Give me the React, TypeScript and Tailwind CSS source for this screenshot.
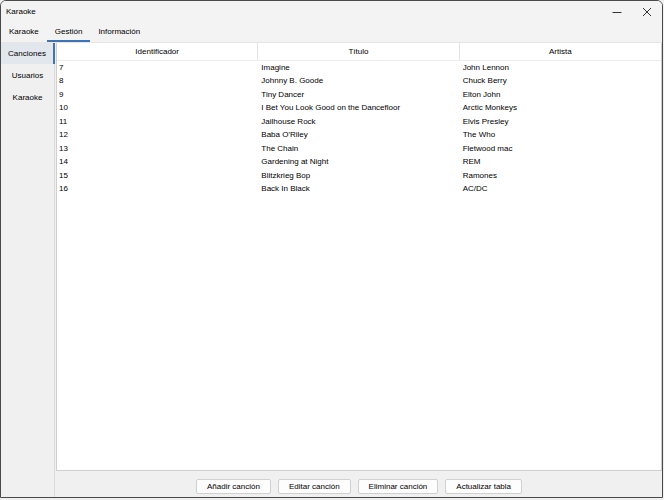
import React from "react"

type Song = { id: number; title: string; artist: string }

const songs: Song[] = [
  { id: 7, title: "Imagine", artist: "John Lennon" },
  { id: 8, title: "Johnny B. Goode", artist: "Chuck Berry" },
  { id: 9, title: "Tiny Dancer", artist: "Elton John" },
  { id: 10, title: "I Bet You Look Good on the Dancefloor", artist: "Arctic Monkeys" },
  { id: 11, title: "Jailhouse Rock", artist: "Elvis Presley" },
  { id: 12, title: "Baba O'Riley", artist: "The Who" },
  { id: 13, title: "The Chain", artist: "Fletwood mac" },
  { id: 14, title: "Gardening at Night", artist: "REM" },
  { id: 15, title: "Blitzkrieg Bop", artist: "Ramones" },
  { id: 16, title: "Back In Black", artist: "AC/DC" },
]

const menuItems = ["Karaoke", "Gestión", "Información"]
const sideItems = ["Canciones", "Usuarios", "Karaoke"]
const buttons = ["Añadir canción", "Editar canción", "Eliminar canción", "Actualizar tabla"]

const App = () => {
  return (
    <div
      className="w-[664px] h-[500px] bg-[#f0f0f0] text-black text-[8px] overflow-hidden"
      style={{ fontFamily: '"Liberation Sans", Arial, sans-serif' }}
    >
      <div className="w-[663px] h-[498px] flex flex-col border border-[#4a4a4a] rounded-t-[6px] overflow-hidden">
        {/* title bar */}
        <div className="h-[21px] flex items-center justify-between bg-[#f3f3f3] pl-[5px]">
          <span>Karaoke</span>
          <div className="flex items-center h-full">
            <div className="w-[30px] h-full flex items-center justify-center">
              <svg width="10" height="10" viewBox="0 0 10 10">
                <path d="M0.5 5.5h9" stroke="#333" strokeWidth="1" />
              </svg>
            </div>
            <div className="w-[30px] h-full flex items-center justify-center">
              <svg width="10" height="10" viewBox="0 0 10 10">
                <path d="M1 1l8 8M9 1l-8 8" stroke="#333" strokeWidth="1" />
              </svg>
            </div>
          </div>
        </div>

        {/* menu tabs */}
        <div className="h-[20px] flex items-stretch bg-[#f3f3f3]">
          {menuItems.map((m, i) => (
            <div
              key={m}
              className={
                i === 1
                  ? "px-[8px] pt-[1px] flex items-center border-b-2 border-[#3a76b5]"
                  : "px-[8px] pt-[1px] flex items-center border-b-2 border-transparent"
              }
            >
              {m}
            </div>
          ))}
        </div>
        <div className="h-[1px] bg-[#e5e5e5]" />

        {/* body */}
        <div className="flex-1 flex min-h-0">
          <div className="w-[54px] flex flex-col border-r border-[#d9d9d9]">
            {sideItems.map((s, i) => (
              <div
                key={s}
                className={
                  i === 0
                    ? "h-[21px] mb-[1px] flex items-center justify-center bg-[#e2e6ed] border-r-2 border-[#3a76b5] mr-[-1px]"
                    : "h-[21px] mb-[1px] flex items-center justify-center"
                }
              >
                {s}
              </div>
            ))}
          </div>

          <div className="flex-1 flex flex-col pl-[1px]">
            <div className="flex-1 bg-white border border-[#cfcfcf] border-t-0">
              <div className="grid grid-cols-3 h-[18px] border-b border-[#ececec]">
                <div className="flex items-center justify-center border-r border-[#e3e3e3]">Identificador</div>
                <div className="flex items-center justify-center border-r border-[#e3e3e3]">Título</div>
                <div className="flex items-center justify-center">Artista</div>
              </div>
              {songs.map((s) => (
                <div key={s.id} className="grid grid-cols-3 h-[13.5px] items-center">
                  <div className="pl-[2px]">{s.id}</div>
                  <div className="pl-[3px]">{s.title}</div>
                  <div className="pl-[3px]">{s.artist}</div>
                </div>
              ))}
            </div>
            <div className="h-[26px] flex items-start justify-center gap-[7px] pt-[8px]">
              {buttons.map((b) => (
                <button
                  key={b}
                  className="h-[15px] px-[10px] bg-[#fdfdfd] border border-[#d0d0d0] rounded-[2px] text-[8px] leading-none"
                >
                  {b}
                </button>
              ))}
            </div>
          </div>
        </div>
      </div>
    </div>
  )
}

export default App
